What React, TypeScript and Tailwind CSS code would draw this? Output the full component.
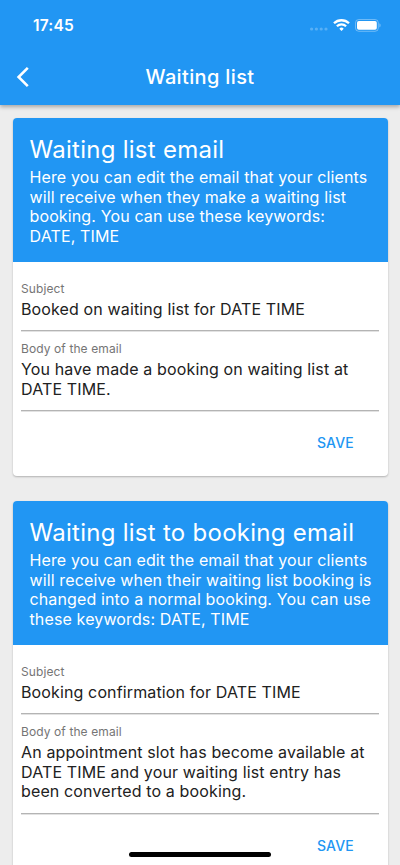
import { useState } from 'react'

interface EmailTemplate {
  id: string
  title: string
  description: string[]
  subject: string
  body: string[]
}

const templates: EmailTemplate[] = [
  {
    id: 'waiting-list',
    title: 'Waiting list email',
    description: [
      'Here you can edit the email that your clients',
      'will receive when they make a waiting list',
      'booking. You can use these keywords:',
      'DATE, TIME',
    ],
    subject: 'Booked on waiting list for DATE TIME',
    body: ['You have made a booking on waiting list at', 'DATE TIME.'],
  },
  {
    id: 'waiting-list-to-booking',
    title: 'Waiting list to booking email',
    description: [
      'Here you can edit the email that your clients',
      'will receive when their waiting list booking is',
      'changed into a normal booking. You can use',
      'these keywords: DATE, TIME',
    ],
    subject: 'Booking confirmation for DATE TIME',
    body: [
      'An appointment slot has become available at',
      'DATE TIME and your waiting list entry has',
      'been converted to a booking.',
    ],
  },
]

function StatusBar() {
  return (
    <div className="flex h-[50px] items-center justify-between pl-[33px] pr-[19px]">
      <span className="pt-px text-[15.5px] font-semibold leading-5 tracking-[0.2px]">17:45</span>
      <div className="flex items-center">
        <svg className="mt-[8px]" width="18" height="4" viewBox="0 0 18 4" fill="white" fillOpacity="0.25">
          <circle cx="1.6" cy="2" r="1.6" />
          <circle cx="6.4" cy="2" r="1.6" />
          <circle cx="11.2" cy="2" r="1.6" />
          <circle cx="16" cy="2" r="1.6" />
        </svg>
        <svg className="ml-[5px]" width="17" height="12" viewBox="0 0 17 12" fill="none" stroke="white" strokeWidth="2.3">
          <path d="M1 4.3a10.7 10.7 0 0 1 15 0" />
          <path d="M3.9 7.2a6.6 6.6 0 0 1 9.2 0" />
          <path d="M8.5 12 6.3 9.7a3.1 3.1 0 0 1 4.4 0z" fill="white" stroke="none" />
        </svg>
        <svg className="ml-[5px]" width="26" height="13" viewBox="0 0 26 13" fill="none">
          <rect x="0.5" y="0.5" width="22.8" height="11.8" rx="3.3" stroke="white" strokeOpacity="0.35" />
          <rect x="2" y="2" width="19.8" height="8.8" rx="1.8" fill="white" />
          <path d="M24.4 4.3v4.2c1.6-.6 1.6-3.6 0-4.2z" fill="white" fillOpacity="0.4" />
        </svg>
      </div>
    </div>
  )
}

function Header() {
  return (
    <header className="relative z-10 h-[105px] shrink-0 bg-[#2196f3] text-white shadow-[0_2px_4px_rgba(0,0,0,0.3)]">
      <StatusBar />
      <div className="grid h-[54px] grid-cols-[56px_1fr_56px] items-center">
        <button type="button" aria-label="Back" className="pl-4">
          <svg width="14" height="20" viewBox="0 0 14 20" fill="none" stroke="white" strokeWidth="2.6">
            <path d="M11.8 0.9 2.6 10l9.2 9.1" />
          </svg>
        </button>
        <h1 className="text-center text-[20px] font-medium leading-6 tracking-[0.35px]">Waiting list</h1>
      </div>
    </header>
  )
}

function Field({ label, lines }: { label: string; lines: string[] }) {
  return (
    <div className="border-b-[1px] border-[#b4b4b4] pb-[10.6px] shadow-[0_1px_0_#e2e2e2]">
      <div className="text-[12px] leading-[18px] tracking-[0.1px] text-[#757575]">{label}</div>
      <div className="mt-[2px] text-[16px] leading-[19.5px] tracking-[0.13px] text-[#212121]">
        {lines.map((line) => (
          <div key={line} className="whitespace-nowrap">{line}</div>
        ))}
      </div>
    </div>
  )
}

function TemplateCard({ template }: { template: EmailTemplate }) {
  const [saved, setSaved] = useState(false)

  return (
    <section className="overflow-hidden rounded-[4px] bg-white shadow-[0_1px_2px_rgba(0,0,0,0.25)]">
      <div className="h-[144.5px] bg-[#2196f3] px-[17px] pt-[17px] text-white">
        <h2 className="whitespace-nowrap text-[24px] leading-[30px] tracking-[0.27px]">{template.title}</h2>
        <div className="mt-[3.6px] text-[16px] leading-[19.5px] tracking-[0.13px]">
          {template.description.map((line) => (
            <div key={line} className="whitespace-nowrap">{line}</div>
          ))}
        </div>
      </div>
      <div className="flex flex-col gap-[9.3px] px-[8.5px] pt-[17.8px]">
        <Field label="Subject" lines={[template.subject]} />
        <Field label="Body of the email" lines={template.body} />
      </div>
      <div className="flex h-[65px] items-center justify-end pr-[33.5px]">
        <button
          type="button"
          onClick={() => setSaved(!saved)}
          className="text-[14px] font-medium leading-5 tracking-[0.2px] text-[#2196f3]"
        >
          SAVE
        </button>
      </div>
    </section>
  )
}

export default function App() {
  return (
    <div className="relative flex h-[865px] w-[400px] flex-col overflow-hidden bg-[#ededed] font-['Inter',sans-serif]">
      <Header />
      <main className="flex flex-col gap-[25px] px-[12.5px] pt-[12.5px]">
        {templates.map((template) => (
          <TemplateCard key={template.id} template={template} />
        ))}
      </main>
      {/* Home indicator */}
      <div className="absolute bottom-[8px] left-[129px] h-[5px] w-[142px] rounded-full bg-black" />
    </div>
  )
}
